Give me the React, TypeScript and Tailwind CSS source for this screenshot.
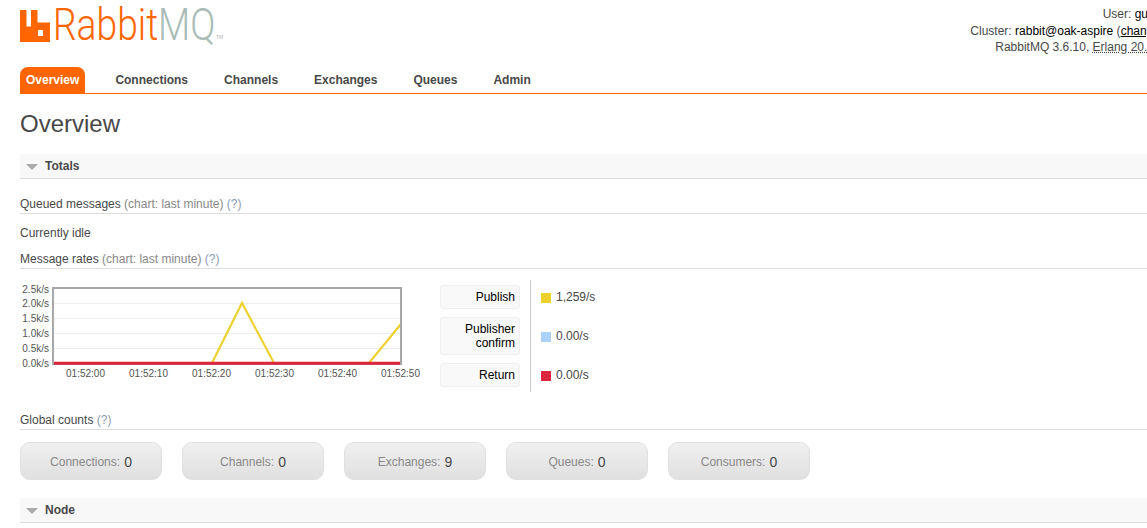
const tabs = ["Connections", "Channels", "Exchanges", "Queues", "Admin"];
const counts = [
  ["Connections", "0"],
  ["Channels", "0"],
  ["Exchanges", "9"],
  ["Queues", "0"],
  ["Consumers", "0"],
];
const legend = [
  { label: "Publish", value: "1,259/s", swatch: "bg-[#edd12f]", box: "h-6" },
  { label: "Publisher confirm", value: "0.00/s", swatch: "bg-[#aad1f9]", box: "h-[38px]" },
  { label: "Return", value: "0.00/s", swatch: "bg-[#dd263e]", box: "h-6" },
];

const Section = ({ title }: { title: string }) => (
  <div className="flex h-[25px] items-center bg-[#f8f8f8] border-b border-[#ddd] pl-[6px] text-xs font-bold text-[#484848]">
    <span className="mr-[7px] mt-[2px] h-0 w-0 border-x-[6px] border-t-[6px] border-x-transparent border-t-[#aaa]" />
    {title}
  </div>
);

const Heading = ({ title, chart }: { title: string; chart?: boolean }) => (
  <div className="h-[18px] border-b border-[#ddd] leading-[16px]">
    {title} {chart && <span className="text-[#888]">(chart: last minute) </span>}
    <span className="text-[#8a9bb0]">(?)</span>
  </div>
);

const Chart = () => {
  const ys = [288, 303, 318, 333, 348, 363];
  const yLabels = ["2.5k/s", "2.0k/s", "1.5k/s", "1.0k/s", "0.5k/s", "0.0k/s"];
  const xs = ["01:52:00", "01:52:10", "01:52:20", "01:52:30", "01:52:40", "01:52:50"];
  return (
    <svg width="430" height="112" viewBox="0 280 430 112" className="shrink-0 -ml-5">
      {ys.slice(1, 5).map((y) => (
        <line key={y} x1="54" x2="400" y1={y + 0.5} y2={y + 0.5} stroke="#eee" />
      ))}
      <polyline points="212,363 242,303 274,363 369,363 401,324" fill="none" stroke="#edd12f" strokeWidth="2.200" />
      <rect x="53" y="288" width="348" height="76" fill="none" stroke="#a8a8a8" strokeWidth="2" />
      <line x1="54" x2="400" y1="363.300" y2="363.300" stroke="#dd263e" strokeWidth="3" />
      {yLabels.map((t, i) => (
        <text key={t} x="49" y={ys[i] + (i === 0 ? 5 : 4.4)} textAnchor="end" fontSize="10" fill="#545454">{t}</text>
      ))}
      {xs.map((t, i) => (
        <text key={t} x={85.5 + i * 63} y="377" textAnchor="middle" fontSize="10" fill="#545454">{t}</text>
      ))}
    </svg>
  );
};

export default function App() {
  return (
    <div className="h-[528px] w-[1147px] overflow-hidden bg-white font-['Liberation_Sans',Arial,sans-serif] text-xs text-[#484848]">
      <div className="w-[1164px]">
        <header className="flex h-[67px] justify-between pl-5">
          <div className="flex h-[50px] pt-[9px]">
            <svg width="31" height="33" viewBox="0 0 31 33" className="shrink-0">
              <path fill="#f60" fillRule="evenodd" d="M0 1h6.500v16.500h4.500V1h6.500v12.500H30V33H0z M18 21h5v6h-5z" />
            </svg>
            <span className="ml-[2px] -mt-[8px] inline-block w-[163px] origin-left scale-x-[0.845] whitespace-nowrap font-['Roboto',sans-serif] text-[44px] font-light leading-[48px] text-[#f60]">
              Rabbit<span className="text-[#a9bcb8]">MQ</span>
            </span>
            <span className="mt-[25px] text-[5px] text-[#b5b5b5]">TM</span>
          </div>
          <div className="pt-[6px] text-right leading-[16.500px]">
            <div>User: <span className="text-black">guest</span></div>
            <div>Cluster: <span className="text-black">rabbit@oak-aspire</span> (<span className="text-black underline">change</span>)</div>
            <div>RabbitMQ 3.6.10, <span className="underline decoration-dotted">Erlang 20.0.2</span></div>
          </div>
        </header>

        <div className="ml-5 flex h-[27px] border-b border-[#f60]">
          <div className="flex h-[26px] items-center rounded-t-lg bg-[#f60] px-[6px] font-bold text-white">Overview</div>
          {tabs.map((t) => (
            <div key={t} className="ml-6 flex h-[26px] items-center px-[6px] font-bold">{t}</div>
          ))}
        </div>

        <div className="pl-5">
          <h1 className="mt-[15px] h-[29px] text-2xl leading-[29px]">Overview</h1>
          <div className="mt-4"><Section title="Totals" /></div>
          <div className="mt-[17px]"><Heading title="Queued messages" chart /></div>
          <p className="mt-3 h-[14px] leading-[14px]">Currently idle</p>
          <div className="mt-[11px]"><Heading title="Message rates" chart /></div>

          <div className="mt-[11px] flex h-[112px]">
            <Chart />
            <div className="ml-[10px] box-border flex w-[90px] shrink-0 flex-col gap-2 pt-[5px] pr-[10px]">
              {legend.map((l) => (
                <div key={l.label} className={`${l.box} flex items-center justify-end rounded-[3px] border border-[#f0f0f0] bg-[#f9f9f9] px-1 text-right leading-[14px] text-black`}>
                  {l.label}
                </div>
              ))}
            </div>
            <div className="flex flex-col gap-2 border-l border-[#ccc] pt-[5px] pl-[10px]">
              {legend.map((l) => (
                <div key={l.label} className={`${l.box} flex items-center`}>
                  <span className={`${l.swatch} mr-[5px] mt-[2px] h-[10px] w-[10px]`} />
                  {l.value}
                </div>
              ))}
            </div>
          </div>

          <div className="mt-5"><Heading title="Global counts" /></div>
          <div className="mt-3 flex gap-5">
            {counts.map(([name, n]) => (
              <div key={name} className="flex h-[38px] w-[142px] items-center justify-center rounded-[10px] border border-[#e0e0e0] bg-gradient-to-b from-[#f0f0f0] to-[#e0e0e0] pt-[2px] text-[#888]">
                {name}:<span className="ml-1 text-sm text-[#484848]">{n}</span>
              </div>
            ))}
          </div>
          <div className="mt-[18px]"><Section title="Node" /></div>
        </div>
      </div>
    </div>
  );
}
